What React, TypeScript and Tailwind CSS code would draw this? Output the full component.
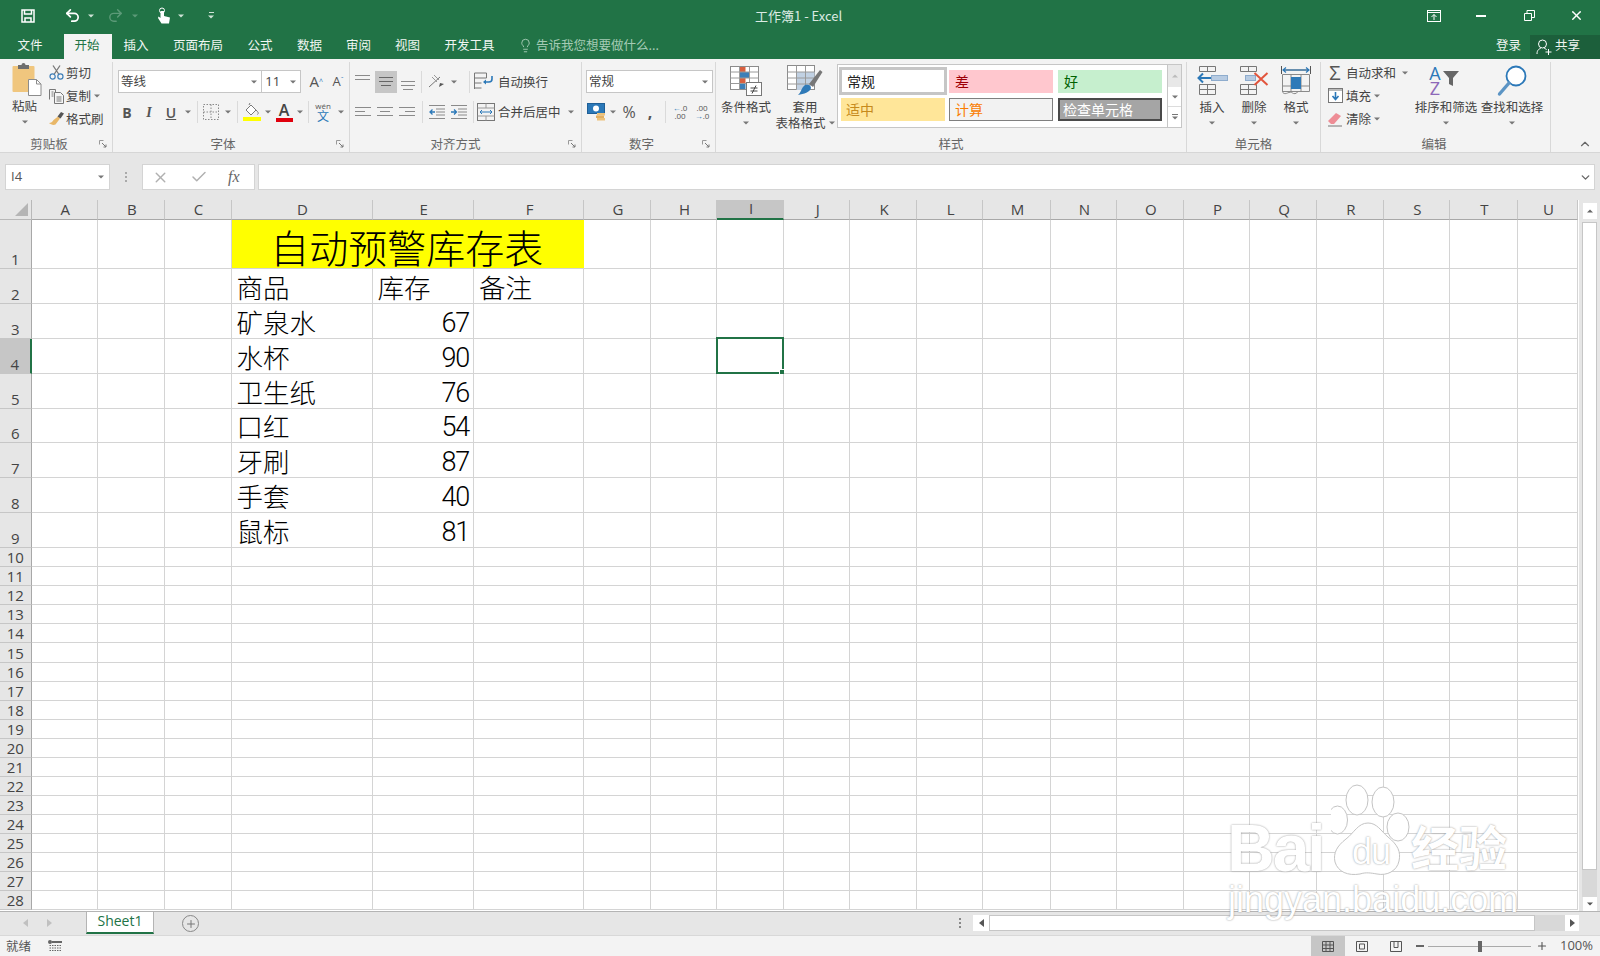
import type { ReactNode } from 'react';
import clsx from 'clsx';
import { Undo2, Redo2, X, Check, ChevronUp, ChevronDown, Plus, Lightbulb } from 'lucide-react';

const columns = ['A', 'B', 'C', 'D', 'E', 'F', 'G', 'H', 'I', 'J', 'K', 'L', 'M', 'N', 'O', 'P', 'Q', 'R', 'S', 'T', 'U'];
const stock: Record<number, [string, string, string]> = {
  2: ['商品', '库存', '备注'],
  3: ['矿泉水', '67', ''],
  4: ['水杯', '90', ''],
  5: ['卫生纸', '76', ''],
  6: ['口红', '54', ''],
  7: ['牙刷', '87', ''],
  8: ['手套', '40', ''],
  9: ['鼠标', '81', ''],
};
const rowNumbers = Array.from({ length: 28 }, (_, i) => i + 1);

function Caret({ className, color = '#777' }: { className?: string; color?: string }) {
  return (
    <svg width="6" height="4" viewBox="0 0 6 4" className={clsx('shrink-0', className)}>
      <path d="M0 0.5h6L3 3.5z" fill={color} />
    </svg>
  );
}

function Divider({ className }: { className?: string }) {
  return <div className={clsx('w-px h-[22px] bg-[#dadada] shrink-0', className)} />;
}

function Launcher() {
  return (
    <svg width="8" height="8" viewBox="0 0 8 8" className="absolute right-[5px] bottom-[4px]">
      <path d="M0.5 0.5h4M0.5 0.5v4" stroke="#999" fill="none" />
      <path d="M3 3l4 4M7 4.5V7H4.5" stroke="#777" fill="none" />
    </svg>
  );
}

function Group({ className, label, launcher, children, labelClass }: { className: string; label: string; launcher?: boolean; children: ReactNode; labelClass?: string }) {
  return (
    <section className={clsx('relative h-[90px] shrink-0 border-r border-[#d8d8d8]', className)}>
      <div className="h-[74px]">{children}</div>
      <div className={clsx('h-[16px] flex items-center justify-center text-[12.5px] leading-[16px] text-[#666]', labelClass)}>{label}</div>
      {launcher && <Launcher />}
    </section>
  );
}

function LargeButton({ className, icon, lines, caretInline }: { className?: string; icon: ReactNode; lines: string[]; caretInline?: boolean }) {
  return (
    <div className={clsx('flex flex-col items-center shrink-0', className)}>
      <div className="h-[37px] flex items-center justify-center">{icon}</div>
      {lines.map((t) => (
        <div key={t} className="h-[16px] text-[12.5px] leading-[16px] whitespace-nowrap flex items-center gap-[3px] text-[#444]">
          {t}
          {caretInline && t === lines[lines.length - 1] && <Caret />}
        </div>
      ))}
      {!caretInline && <div className="h-[16px] flex items-center"><Caret /></div>}
    </div>
  );
}

function Lines({ widths, y = [0, 4, 8], color = '#8a8a8a' }: { widths: [number, number][]; y?: number[]; color?: string }) {
  return (
    <svg width="16" height="12" viewBox="0 0 16 12">
      {widths.map(([a, b], i) => (
        <path key={i} d={`M${a} ${y[i] + 1.5}H${b}`} stroke={color} strokeWidth="1" />
      ))}
    </svg>
  );
}

function PasteIcon() {
  return (
    <svg width="32" height="34" viewBox="0 0 32 34">
      <rect x="0.5" y="4" width="22" height="26" rx="1" fill="#f0c67e" />
      <path d="M6 7V3h3.5a2 2 0 0 1 4 0H17v4z" fill="#6e6e6e" />
      <path d="M16.5 17.5h8l4.5 4.5v11.5H16.5z" fill="#fff" stroke="#8c8c8c" />
      <path d="M24.5 17.5V22H29" fill="none" stroke="#8c8c8c" />
    </svg>
  );
}

function ScissorsIcon() {
  return (
    <svg width="15" height="15" viewBox="0 0 15 15" fill="none">
      <path d="M4 0.5l6 9M11 0.5l-6 9" stroke="#777" strokeWidth="1.3" />
      <circle cx="3.6" cy="11.5" r="2.6" stroke="#3f7fb8" strokeWidth="1.2" />
      <circle cx="11.4" cy="11.5" r="2.6" stroke="#3f7fb8" strokeWidth="1.2" />
    </svg>
  );
}

function CopyIcon() {
  return (
    <svg width="15" height="16" viewBox="0 0 15 16" fill="none" stroke="#777">
      <path d="M0.5 11.5v-10h6v3" />
      <path d="M5.5 4.5h6l3 3v8h-9z" fill="#f5f5f5" />
      <path d="M7.5 9h5M7.5 11h5M7.5 13h5M2.5 4h2M2.5 6h2M2.5 8h2" />
    </svg>
  );
}

function BrushIcon() {
  return (
    <svg width="15" height="14" viewBox="0 0 15 14">
      <path d="M9 4.5l2 2-4.500 6c-2 1-5 0-6.500-1.500 2 0 3.500-1 4.500-3z" fill="#e8b768" />
      <path d="M8.500 4.500l3.500-4.500 3 1.500-3.500 5z" fill="#555" />
    </svg>
  );
}

function Fill() {
  return (
    <svg width="18" height="20" viewBox="0 0 18 20">
      <path d="M3 8l5-5 5 5-5 5z" fill="#fff" stroke="#7a7a7a" />
      <path d="M6 3l1-2M13 8c2 2 3 3 1.500 4.500" stroke="#7a7a7a" fill="none" />
      <rect x="0" y="15" width="18" height="4" fill="#ffff00" />
    </svg>
  );
}

function AlignOrient() {
  return (
    <svg width="18" height="16" viewBox="0 0 18 16" fill="none" stroke="#777">
      <path d="M1 13L12 3" />
      <path d="M4 3l5 5M6 1l5 5" stroke="#999" />
      <path d="M11 13l5-3-4-1z" fill="#555" stroke="none" />
    </svg>
  );
}

function WrapIcon() {
  return (
    <svg width="20" height="19" viewBox="0 0 20 19" fill="none">
      <path d="M0.5 1h12M0.500 6h12M0.500 11h7M0.500 16h7" stroke="#777" />
      <path d="M0.500 1v16M12.500 1v5" stroke="#777" />
      <path d="M18 4v3c0 2-1 3-3 3h-4" stroke="#2b78b8" strokeWidth="1.600" />
      <path d="M9 10l3-2.500v5z" fill="#2b78b8" />
    </svg>
  );
}

function MergeIcon() {
  return (
    <svg width="18" height="18" viewBox="0 0 18 18" fill="none">
      <rect x="0.500" y="0.500" width="17" height="17" stroke="#777" />
      <path d="M0.500 5h17M0.500 13h17M9 0.500V5M9 13v4.500" stroke="#999" />
      <path d="M3 9h12" stroke="#2b78b8" />
      <path d="M5 7L3 9l2 2M13 7l2 2-2 2" stroke="#2b78b8" />
    </svg>
  );
}

function IndentIcon({ dir }: { dir: 'in' | 'out' }) {
  return (
    <svg width="16" height="14" viewBox="0 0 16 14" fill="none">
      <path d="M0 0.500h16M7 4h9M7 7h9M7 10h9M0 13.500h16" stroke="#8a8a8a" />
      <path d={dir === 'out' ? 'M6 7H1M3.500 4.500L1 7l2.500 2.500' : 'M0 7h5M3 4.500L5.500 7 3 9.500'} stroke="#2b78b8" strokeWidth="1.300" />
    </svg>
  );
}

function MoneyIcon() {
  return (
    <svg width="20" height="18" viewBox="0 0 20 18">
      <rect x="0.500" y="0.500" width="17" height="10" fill="#2b78b8" stroke="#1f5f96" />
      <circle cx="9" cy="5.500" r="3" fill="#fff" />
      <rect x="10" y="10" width="8" height="2.500" fill="#edc27a" />
      <rect x="9" y="12.500" width="8" height="2.500" fill="#e3b062" />
      <rect x="10" y="15" width="8" height="2.500" fill="#edc27a" />
    </svg>
  );
}

function ConditionalIcon() {
  return (
    <svg width="32" height="30" viewBox="0 0 32 30" fill="none">
      <rect x="0.500" y="0.500" width="28" height="23" fill="#fff" stroke="#8c8c8c" />
      <rect x="9.500" y="1" width="6" height="5" fill="#d9603f" />
      <rect x="9.500" y="6" width="10" height="6" fill="#3c7fb8" />
      <rect x="9.500" y="12" width="6" height="5" fill="#d9603f" />
      <rect x="9.500" y="17" width="6" height="6" fill="#3c7fb8" />
      <path d="M9.500 0.500v23M19.500 0.500v23M0.500 6h28M0.500 12h28M0.500 17.500h28" stroke="#9a9a9a" />
      <rect x="16.500" y="16.500" width="15" height="13" fill="#fff" stroke="#777" />
      <path d="M20.500 22h7M20.500 25h7M26 19.500l-4 8" stroke="#444" />
    </svg>
  );
}

function TableIcon() {
  return (
    <svg width="36" height="32" viewBox="0 0 36 32" fill="none">
      <rect x="0.500" y="0.500" width="27" height="24" fill="#fff" stroke="#8c8c8c" />
      <path d="M0.500 7h27v12L17 25H9.500V7" fill="#c1d1e3" />
      <path d="M9.500 0.500v24M18.500 0.500v24M0.500 7h27M0.500 13h27M0.500 19h27" stroke="#9a9a9a" />
      <path d="M22 19L33 5l2.500 2L26 22z" fill="#777" />
      <path d="M18 20c3-1 6 0 6 3-1 4-7 6-13 7 3-2 3-7 7-10z" fill="#2f7ab8" />
    </svg>
  );
}

function InsertIcon() {
  return (
    <svg width="31" height="32" viewBox="0 0 31 32" fill="none">
      <path d="M2.500 1.500h16v5h-16zM10.500 1.500v5M2.500 19.500h16v10h-16zM2.500 24.500h16M10.500 19.500v10" stroke="#777" />
      <rect x="14.500" y="10.500" width="16" height="5" fill="#b7cbe2" stroke="#8eaccd" />
      <path d="M14 13H2M6 8.500L1.500 13 6 17.500" stroke="#2b78b8" strokeWidth="2" />
    </svg>
  );
}

function DeleteIcon() {
  return (
    <svg width="30" height="32" viewBox="0 0 30 32" fill="none">
      <path d="M1.500 1.500h16v5h-16zM9.500 1.500v5M1.500 19.500h16v10h-16zM1.500 24.500h16M9.500 19.500v10" stroke="#777" />
      <rect x="6.500" y="10.500" width="10" height="5" fill="#b7cbe2" stroke="#8eaccd" />
      <path d="M15.500 8l13 12M28.500 8l-13 12" stroke="#e2553d" strokeWidth="2" />
    </svg>
  );
}

function FormatIcon() {
  return (
    <svg width="30" height="32" viewBox="0 0 30 32" fill="none">
      <path d="M2 5h26M0.500 1v8M29.500 1v8" stroke="#555" />
      <path d="M2 5h26M5 2.500L2 5l3 2.500M25 2.500L28 5l-3 2.500" stroke="#2b78b8" strokeWidth="1.200" />
      <path d="M1.500 9.500h27v17h-27zM10 9.500v17M20 9.500v17M1.500 21h27" stroke="#8a8a8a" />
      <rect x="10" y="12" width="10" height="12" fill="#2f7ab8" />
      <path d="M1.500 26c0 3 3 3 5 2s4-1 5 0 4 1 5-1" stroke="#8a8a8a" />
    </svg>
  );
}

function SortIcon() {
  return (
    <div className="h-[34px] flex items-center mr-[4px]">
      <div className="flex flex-col items-center font-['Open_Sans'] text-[18px] leading-[15px]">
        <span className="text-[#2b78b8]">A</span>
        <span className="text-[#8d68b8]">Z</span>
      </div>
      <svg width="16" height="16" viewBox="0 0 16 16" className="ml-[2px] mb-[6px]">
        <path d="M0 1h16L10 8v8l-4-2V8z" fill="#666" />
      </svg>
    </div>
  );
}

function SearchIcon() {
  return (
    <svg width="30" height="32" viewBox="0 0 30 32" fill="none">
      <circle cx="19" cy="11" r="9.500" stroke="#2b78b8" strokeWidth="1.800" fill="#fff" />
      <path d="M12 18L2.500 29" stroke="#5b94c4" strokeWidth="3.400" strokeLinecap="round" />
    </svg>
  );
}

function SmallRow({ icon, label, caret, className, labelClass = 'ml-[2px]' }: { icon: ReactNode; label: string; caret?: boolean; className?: string; labelClass?: string }) {
  return (
    <div className={clsx('flex items-center h-[23px]', className)}>
      <div className="w-[16px] flex justify-center">{icon}</div>
      <span className={clsx('text-[12.5px] leading-[16px] text-[#444] whitespace-nowrap', labelClass)}>{label}</span>
      {caret && <Caret className="ml-[3px]" />}
    </div>
  );
}

function Ribbon() {
  return (
    <div className="h-[94px] bg-[#f3f3f3] border-b border-[#d6d6d6] flex items-start pt-[3px] shrink-0">
      <Group className="w-[113px]" label="剪贴板" launcher labelClass="pr-[14px]">
        <div className="flex">
          <div className="w-[48px] pl-[12px] flex flex-col items-start">
            <PasteIcon />
            <div className="text-[12.5px] leading-[16px] text-[#444] mt-[2px]">粘贴</div>
            <Caret className="ml-[10px] mt-[6px]" />
          </div>
          <div className="flex flex-col pt-0">
            <SmallRow icon={<ScissorsIcon />} label="剪切" className="mt-[-1px]" />
            <SmallRow icon={<CopyIcon />} label="复制" caret />
            <SmallRow icon={<BrushIcon />} label="格式刷" />
          </div>
        </div>
      </Group>

      <Group className="w-[237px]" label="字体" launcher labelClass="pr-[16px]">
        <div className="pt-[8px] pl-[5px] flex flex-col gap-[8px]">
          <div className="flex items-center h-[23px]">
            <div className="w-[145px] h-[23px] bg-white border border-[#c6c6c6] flex items-center pl-[2px] text-[12.5px] text-[#444]">
              <span>等线</span>
              <Caret className="ml-auto mr-[4px]" />
            </div>
            <div className="w-[39px] h-[23px] bg-white border border-l-0 border-[#c6c6c6] flex items-center pl-[3px] text-[13px] text-[#444] font-['Open_Sans']">
              <span>11</span>
              <Caret className="ml-auto mr-[4px]" />
            </div>
            <span className="ml-[4px] w-[22px] text-center text-[15px] text-[#555] font-['Open_Sans']">A<sup className="text-[#2b78b8] text-[7px]">^</sup></span>
            <span className="w-[22px] text-center text-[13px] text-[#555] font-['Open_Sans']">A<sup className="text-[#2b78b8] text-[7px]">ˇ</sup></span>
          </div>
          <div className="flex items-center h-[22px] ml-[-2px] text-[#555]">
            <span className="w-[22px] text-center font-bold text-[14px] font-['Open_Sans']">B</span>
            <span className="w-[22px] text-center italic font-bold text-[14px] font-['Liberation_Serif']">I</span>
            <span className="w-[22px] text-center underline font-['Open_Sans'] font-semibold text-[14px]">U</span>
            <div className="w-[11px] flex justify-center"><Caret /></div>
            <Divider className="ml-[4px]" />
            <div className="w-[26px] flex justify-center">
              <svg width="16" height="16" viewBox="0 0 16 16" fill="none" stroke="#8a8a8a" strokeDasharray="1.500 1.500">
                <rect x="0.500" y="0.500" width="15" height="15" />
                <path d="M8 0.500v15M0.500 8h15" />
              </svg>
            </div>
            <div className="w-[8px] flex justify-center"><Caret /></div>
            <Divider className="ml-[5px]" />
            <div className="w-[24px] ml-[2px] flex justify-center"><Fill /></div>
            <div className="w-[8px] flex justify-center"><Caret /></div>
            <div className="w-[24px] flex flex-col items-center">
              <span className="text-[16px] leading-[15px] font-semibold font-['Open_Sans'] text-[#444]">A</span>
              <div className="w-[17px] h-[4px] bg-[#e0000d]" />
            </div>
            <div className="w-[8px] flex justify-center"><Caret /></div>
            <Divider className="ml-[4px]" />
            <div className="w-[28px] flex flex-col items-center leading-none">
              <span className="text-[8px] h-[8px] leading-[8px] font-['Open_Sans'] text-[#555]">wén</span>
              <span className="text-[12px] h-[12px] leading-[12px] text-[#2b78b8]">文</span>
            </div>
            <div className="w-[8px] flex justify-center"><Caret /></div>
          </div>
        </div>
      </Group>

      <Group className="w-[232px]" label="对齐方式" launcher labelClass="pr-[20px]">
        <div className="pt-[8px] flex flex-col gap-[8px]">
          <div className="flex items-center h-[23px] pl-[2px]">
            <div className="w-[22px] h-[22px] flex justify-center items-start pt-[3px]"><Lines widths={[[0, 15], [0, 15]]} /></div>
            <div className="ml-[1px] w-[22px] h-[22px] bg-[#c6c6c6] flex justify-center items-center"><Lines widths={[[1, 15], [1, 15], [3, 13]]} color="#666" /></div>
            <div className="w-[22px] h-[22px] flex justify-center items-end pb-[1px]"><Lines widths={[[1, 15], [1, 15], [3, 13]]} /></div>
            <Divider className="ml-[2px]" />
            <div className="w-[29px] flex justify-center"><AlignOrient /></div>
            <Caret />
            <Divider className="ml-[12px]" />
            <div className="w-[28px] flex justify-center"><WrapIcon /></div>
            <span className="text-[12.5px] text-[#444] leading-[16px]">自动换行</span>
          </div>
          <div className="flex items-center h-[22px] pl-[2px]">
            <div className="w-[22px] flex justify-center"><Lines widths={[[0, 16], [0, 10], [0, 16]]} /></div>
            <div className="w-[22px] flex justify-center"><Lines widths={[[0, 16], [3, 13], [0, 16]]} /></div>
            <div className="w-[22px] flex justify-center"><Lines widths={[[0, 16], [6, 16], [0, 16]]} /></div>
            <Divider className="ml-[4px]" />
            <div className="w-[28px] flex justify-center"><IndentIcon dir="out" /></div>
            <div className="w-[16px] flex justify-center"><IndentIcon dir="in" /></div>
            <Divider className="ml-[6px]" />
            <div className="w-[24px] flex justify-center"><MergeIcon /></div>
            <span className="text-[12.5px] text-[#444] leading-[16px]">合并后居中</span>
            <Caret className="ml-[7px]" />
          </div>
        </div>
      </Group>

      <Group className="w-[134px]" label="数字" launcher labelClass="pr-[14px]">
        <div className="pt-[8px] pl-[4px] flex flex-col gap-[8px]">
          <div className="w-[127px] h-[23px] bg-white border border-[#c6c6c6] flex items-center pl-[2px] text-[12.5px] text-[#444]">
            <span>常规</span>
            <Caret className="ml-auto mr-[4px]" />
          </div>
          <div className="flex items-center h-[22px] text-[#555]">
            <div className="w-[20px] ml-[1px]"><MoneyIcon /></div>
            <Caret className="ml-[3px]" />
            <span className="w-[24px] ml-[1px] text-center text-[16px] font-['Open_Sans']">%</span>
            <span className="w-[18px] text-center text-[16px] font-bold font-['Open_Sans']">,</span>
            <Divider className="ml-[6px]" />
            <span className="w-[26px] ml-[1px] text-[8px] leading-[8px] text-center font-['Open_Sans']"><span className="text-[#2b78b8]">←</span>.0<br />.00</span>
            <span className="w-[18px] text-[8px] leading-[8px] text-center font-['Open_Sans']">.00<br /><span className="text-[#2b78b8]">→</span>.0</span>
          </div>
        </div>
      </Group>

      <Group className="w-[471px]" label="样式">
        <div className="flex">
          <LargeButton className="w-[62px] ml-[-1px]" icon={<ConditionalIcon />} lines={['条件格式']} />
          <LargeButton className="w-[54px] ml-[1px]" icon={<TableIcon />} lines={['套用', '表格格式']} caretInline />
          <div className="ml-[5px] mt-[2px] w-[345px] h-[64px] bg-white border border-[#c6c6c6] flex shrink-0 text-[14px]">
            <div className="flex-1 grid grid-cols-[110px_109px_109px] grid-rows-[28px_28px] pl-[1px] pt-[2px] items-center">
              <div className="h-[28px] w-[108px] border-[3px] border-[#c6c6c6] flex items-center pl-[5px] text-[#222]">常规</div>
              <div className="h-[23px] w-[104px] bg-[#ffc7ce] flex items-center pl-[6px] text-[#9c0006]">差</div>
              <div className="h-[23px] w-[104px] bg-[#c6efce] flex items-center pl-[6px] text-[#006100]">好</div>
              <div className="h-[23px] w-[104px] ml-[2px] bg-[#ffe699] flex items-center pl-[5px] text-[#c68a1c]">适中</div>
              <div className="h-[23px] w-[104px] bg-[#f2f2f2] border border-[#7f7f7f] flex items-center pl-[5px] text-[#fa7d00]">计算</div>
              <div className="h-[23px] w-[104px] bg-[#a5a5a5] border-[2px] border-[#4a4a4a] flex items-center pl-[3px] text-white">检查单元格</div>
            </div>
            <div className="w-[14px] flex flex-col border-l border-[#c6c6c6]">
              <div className="h-[22px] bg-[#e8e8e8] flex items-center justify-center"><Caret className="rotate-180" color="#bbb" /></div>
              <div className="h-[20px] border-b border-[#dcdcdc] flex items-center justify-center"><Caret /></div>
              <div className="flex-1 flex flex-col items-center justify-center gap-[1px]">
                <div className="w-[6px] h-px bg-[#777]" />
                <Caret />
              </div>
            </div>
          </div>
        </div>
      </Group>

      <Group className="w-[134px]" label="单元格">
        <div className="flex pl-[4px]">
          <LargeButton className="w-[42px]" icon={<InsertIcon />} lines={['插入']} />
          <LargeButton className="w-[42px]" icon={<DeleteIcon />} lines={['删除']} />
          <LargeButton className="w-[42px]" icon={<FormatIcon />} lines={['格式']} />
        </div>
      </Group>

      <Group className="w-[230px]" label="编辑" labelClass="pr-[3px]">
        <div className="flex">
          <div className="w-[94px] pl-[6px] flex flex-col">
            <div className="flex items-center mt-[-1px]">
              <SmallRow icon={<span className="text-[20px] leading-[20px] text-[#555] font-['Open_Sans']">Σ</span>} label="自动求和" labelClass="ml-[3px]" />
              <Caret className="ml-[6px]" />
            </div>
            <SmallRow
              labelClass="ml-[3px]"
              icon={
                <svg width="15" height="15" viewBox="0 0 15 15" fill="none">
                  <rect x="0.500" y="0.500" width="14" height="14" fill="#fff" stroke="#777" />
                  <path d="M0.500 2h14" stroke="#777" />
                  <path d="M7.500 4v7M4.500 8l3 3.500 3-3.500" stroke="#2b78b8" strokeWidth="1.600" />
                </svg>
              }
              label="填充"
              caret
            />
            <SmallRow
              labelClass="ml-[3px]"
              icon={
                <svg width="16" height="16" viewBox="0 0 16 16" fill="none">
                  <path d="M1 10l8-8 5 3-7 8H4z" fill="#ee8d96" />
                  <path d="M1 15h14" stroke="#777" />
                </svg>
              }
              label="清除"
              caret
            />
          </div>
          <LargeButton className="w-[62px]" icon={<SortIcon />} lines={['排序和筛选']} />
          <LargeButton className="w-[62px] ml-[4px]" icon={<SearchIcon />} lines={['查找和选择']} />
        </div>
      </Group>

      <div className="flex-1 h-[90px] flex items-end justify-end pr-[8px] pb-[1px]">
        <ChevronUp size={14} className="text-[#666]" />
      </div>
    </div>
  );
}

function Sheet() {
  return (
    <div className="relative w-[1579px] h-[711px] grid grid-cols-[31.5px_66.5px_66.5px_67px_141px_101.5px_110px_66.7px_66.5px_67px_66px_67px_66px_67.5px_66.5px_66.5px_66.5px_67px_66.5px_66.5px_67.5px_60.8px] grid-rows-[19.5px_49.5px_repeat(8,34.9px)_repeat(19,19.07px)] bg-white font-['Open_Sans','Noto_Sans_CJK_SC',sans-serif]">
      <div className="bg-[#e6e6e6] border-r border-b border-[#b8b8b8] flex items-end justify-end pr-[3px] pb-[3px]">
        <svg width="13" height="13" viewBox="0 0 13 13"><path d="M13 0v13H0z" fill="#b5b5b5" /></svg>
      </div>
      {columns.map((c) => (
        <div
          key={c}
          className={clsx(
            'flex items-center justify-center pl-[2px] text-[15px] leading-none text-[#444] border-r border-b border-r-[#c6c6c6]',
            c === 'I' ? 'bg-[#c6c6c6] border-b-2 border-b-[#217346]' : 'bg-[#e6e6e6] border-b-[#a8a8a8]',
          )}
        >
          {c}
        </div>
      ))}
      {rowNumbers.map((n) => (
        <Row key={n} n={n} />
      ))}
    </div>
  );
}

function Row({ n }: { n: number }) {
  const data = stock[n];
  return (
    <>
      <div
        className={clsx(
          'flex items-end justify-center text-[15px] leading-[18px] text-[#444] border-b border-b-[#c6c6c6] border-r',
          n === 4 ? 'bg-[#c6c6c6] border-r-2 border-r-[#217346]' : 'bg-[#e6e6e6] border-r-[#a8a8a8]',
        )}
      >
        {n}
      </div>
      {columns.map((c) => {
        if (n === 1 && (c === 'E' || c === 'F')) return null;
        if (n === 1 && c === 'D') {
          return (
            <div key={c} className="col-span-3 bg-[#ffff00] border-b border-[#d4d4d4] flex items-end justify-center pr-[2px] text-[39px] leading-[43px] font-light text-black font-['Noto_Sans_CJK_SC',sans-serif]">
              自动预警库存表
            </div>
          );
        }
        let text = '';
        if (data && c === 'D') text = data[0];
        if (data && c === 'E') text = data[1];
        if (data && c === 'F') text = data[2];
        const numeric = /^\d+$/.test(text);
        return (
          <div
            key={c}
            className={clsx(
              'relative flex items-end border-r border-b border-[#d4d4d4] text-black whitespace-nowrap',
              numeric
                ? "justify-end pr-[4px] text-[27px] leading-[29px] font-['Roboto'] font-light tracking-[-1.2px]"
                : "pl-[5px] text-[26.5px] leading-[32px] font-light font-['Noto_Sans_CJK_SC',sans-serif]",
            )}
          >
            {text}
            {n === 4 && c === 'I' && (
              <div className="absolute -left-[1px] -top-[2px] -right-[1px] -bottom-[1px] border-2 border-[#217346]">
                <div className="absolute -right-[3px] -bottom-[3px] w-[6px] h-[6px] bg-[#217346] border border-white" />
              </div>
            )}
          </div>
        );
      })}
    </>
  );
}

function Watermark() {
  return (
    <div className="absolute left-[1225px] top-[782px] w-[295px] h-[140px] pointer-events-none text-white [text-shadow:0_0_2px_#8f8f8f] font-['Liberation_Sans','Noto_Sans_CJK_SC',sans-serif]">
      <span className="absolute left-[2px] top-[28px] text-[66px] leading-[76px] font-bold tracking-[-2px]">Bai</span>
      <svg width="80" height="96" viewBox="0 0 80 96" className="absolute left-[106px] top-[2px]" fill="#fff" stroke="#c4c4c4" strokeWidth="1">
        <ellipse cx="26" cy="16" rx="11" ry="15" />
        <ellipse cx="52" cy="18" rx="11" ry="15" />
        <ellipse cx="6.500" cy="36" rx="10" ry="14" />
        <ellipse cx="67" cy="43" rx="11" ry="14" />
        <path d="M37 39c9 0 13 8 20 14 10 8 13 15 11 24-2 10-12 15-22 13-6-1-11-2-17 0-12 2-22-2-25-12-2-9 2-16 11-23 8-6 12-16 22-16z" />
      </svg>
      <span className="absolute left-[127px] top-[50px] text-[36px] leading-[40px] tracking-[-1px] text-white">du</span>
      <span className="absolute left-[186px] top-[40px] text-[48px] leading-[56px] font-bold">经验</span>
      <span className="absolute left-[3px] top-[98px] text-[36px] leading-[40px] whitespace-nowrap">jingyan.baidu.com</span>
    </div>
  );
}

export default function App() {
  return (
    <div className="relative w-[1600px] h-[956px] overflow-hidden flex flex-col bg-[#e6e6e6] font-['Noto_Sans_CJK_SC','Liberation_Sans',sans-serif] text-[#444]">
      {/* title bar */}
      <div className="h-[34px] bg-[#217346] flex items-center relative shrink-0 text-white pb-[3px]">
        <div className="flex items-center">
          <svg width="14" height="14" viewBox="0 0 14 14" className="ml-[21px]" fill="none" stroke="#fff" strokeWidth="1.500">
            <path d="M1 1h12v12H1z" />
            <path d="M3.500 1v4h7V1M4 13V9h6v4" />
          </svg>
          <Undo2 size={17} strokeWidth={2.4} className="ml-[29px] text-white" />
          <Caret className="ml-[7px]" color="#cfe3d7" />
          <Redo2 size={17} strokeWidth={2} className="ml-[13px] text-[#5c9a78]" />
          <Caret className="ml-[8px]" color="#5c9a78" />
          <svg width="14" height="17" viewBox="0 0 14 17" className="ml-[19px]" fill="#fff">
            <circle cx="5" cy="3.500" r="2.500" fill="none" stroke="#fff" />
            <path d="M3.500 4v7L1.500 9.500 1 11l3.500 5.500H12l1-6-6-1.500V4z" />
          </svg>
          <Caret className="ml-[7px]" color="#cfe3d7" />
          <div className="ml-[24px] flex flex-col items-center gap-[2px]">
            <div className="w-[5px] h-px bg-[#cfe3d7]" />
            <Caret color="#cfe3d7" />
          </div>
        </div>
        <div className="absolute left-[755px] w-[87px] text-center text-[13px] whitespace-nowrap text-[#dcebe3] font-['Noto_Sans_CJK_SC','Open_Sans',sans-serif]">工作簿1 - Excel</div>
        <div className="ml-auto flex items-center h-full">
          <div className="w-[47px] flex justify-center pr-[4px]">
            <svg width="14" height="12" viewBox="0 0 14 12" fill="none" stroke="#fff">
              <rect x="0.500" y="0.500" width="13" height="11" />
              <path d="M0.500 2.500h13M7 10V4.500M4.500 7L7 4.500 9.500 7" />
            </svg>
          </div>
          <div className="w-[47px] flex justify-center pr-[4px]"><div className="w-[10px] h-[2px] bg-white" /></div>
          <div className="w-[47px] flex justify-center">
            <svg width="11" height="11" viewBox="0 0 11 11" fill="none" stroke="#fff">
              <path d="M0.500 3.500h7v7h-7zM3 3.500v-3h7.500v7H7.500" />
            </svg>
          </div>
          <div className="w-[47px] flex justify-center"><X size={15} strokeWidth={2.2} /></div>
        </div>
      </div>

      {/* tabs */}
      <div className="h-[25px] bg-[#217346] flex items-stretch shrink-0 text-[12.5px] text-[#f0f6f2]">
        {[
          ['文件', 'w-[64px] pr-[4px]'],
          ['开始', 'w-[48px] bg-[#f3f3f3] text-[#217346] pr-[2px]'],
          ['插入', 'w-[50px] pr-[2px]'],
          ['页面布局', 'w-[72px]'],
          ['公式', 'w-[52px]'],
          ['数据', 'w-[47px]'],
          ['审阅', 'w-[51px]'],
          ['视图', 'w-[47px]'],
          ['开发工具', 'w-[77px]'],
        ].map(([t, cls]) => (
          <div key={t} className={clsx('flex items-center justify-center pb-[2px]', cls)}>{t}</div>
        ))}
        <div className="ml-[10px] flex items-center pb-[2px] text-[#a5cbb5]">
          <Lightbulb size={15} strokeWidth={1.5} />
          <span className="ml-[3px]">告诉我您想要做什么...</span>
        </div>
        <div className="ml-auto flex items-center">
          <span className="pb-[2px]">登录</span>
          <div className="ml-[9px] w-[70px] h-[24px] bg-[#1c5f3b] flex items-center pl-[6px]">
            <svg width="16" height="16" viewBox="0 0 16 16" fill="none" stroke="#fff">
              <circle cx="6.500" cy="5" r="4" />
              <path d="M1 15c0-4 2-5 4-6M8 9c1.500.500 2 1 2.500 2M9.500 13h6M12.500 10v6" />
            </svg>
            <span className="ml-[3px] pb-[2px]">共享</span>
          </div>
        </div>
      </div>

      <Ribbon />

      {/* formula bar */}
      <div className="h-[47px] shrink-0 bg-[#e6e6e6] pt-[11px]">
        <div className="flex items-stretch h-[26px]">
          <div className="ml-[5px] w-[105px] bg-white border border-[#d4d4d4] flex items-center pl-[5px] text-[13px] font-['Open_Sans'] text-[#555]">
            I4
            <Caret className="ml-auto mr-[5px]" />
          </div>
          <div className="w-[32px] flex flex-col items-center justify-center gap-[2px]">
            <div className="w-[2px] h-[2px] bg-[#aaa]" />
            <div className="w-[2px] h-[2px] bg-[#aaa]" />
            <div className="w-[2px] h-[2px] bg-[#aaa]" />
          </div>
          <div className="w-[113px] bg-white border border-[#d4d4d4] flex items-center">
            <X size={17} className="ml-[9px] text-[#b0b0b0]" />
            <Check size={18} className="ml-[21px] text-[#b0b0b0]" />
            <span className="ml-[20px] italic text-[16px] text-[#666] font-['Liberation_Serif']">fx</span>
          </div>
          <div className="ml-[3px] flex-1 mr-[5px] bg-white border border-[#d4d4d4] flex items-center justify-end pr-[2px]">
            <ChevronDown size={13} strokeWidth={2.5} className="text-[#666]" />
          </div>
        </div>
      </div>

      {/* sheet */}
      <div className="flex h-[711px] shrink-0">
        <Sheet />
        <div className="w-[21px] flex flex-col items-center bg-[#e6e6e6] pt-[3px]">
          <div className="w-[14px] h-[16px] bg-white flex items-center justify-center"><Caret className="rotate-180" color="#666" /></div>
          <div className="w-[15px] h-[648px] mt-[3px] bg-white border border-[#c6c6c6]" />
          <div className="w-[15px] flex-1 bg-[#d8d8d8]" />
          <div className="w-[14px] h-[14px] bg-white flex items-center justify-center"><Caret color="#555" /></div>
        </div>
      </div>

      {/* sheet tabs */}
      <div className="h-[24px] shrink-0 bg-[#e6e6e6] border-t border-[#b4b4b4] flex items-start">
        <div className="w-[86px] h-[22px] flex items-center pl-[23px] gap-[19px]">
          <svg width="5" height="8" viewBox="0 0 5 8"><path d="M5 0v8L0 4z" fill="#c0c0c0" /></svg>
          <svg width="5" height="8" viewBox="0 0 5 8"><path d="M0 0v8l5-4z" fill="#c0c0c0" /></svg>
        </div>
        <div className="w-[68px] h-[22px] bg-white border-x border-[#b4b4b4] border-b-2 border-b-[#217346] flex items-center justify-center pb-[3px] text-[14px] text-[#217346] font-['Open_Sans']">Sheet1</div>
        <div className="ml-[28px] mt-[3px] w-[17px] h-[17px] rounded-full border border-[#888] flex items-center justify-center">
          <Plus size={12} strokeWidth={2} className="text-[#777]" />
        </div>
        <div className="ml-[760px] mt-[6px] flex flex-col gap-[2px]">
          <div className="w-[2px] h-[2px] bg-[#888]" />
          <div className="w-[2px] h-[2px] bg-[#888]" />
          <div className="w-[2px] h-[2px] bg-[#888]" />
        </div>
        <div className="ml-[12px] mt-[3px] h-[16px] w-[606px] flex">
          <div className="w-[16px] h-full bg-white flex items-center justify-center">
            <svg width="5" height="8" viewBox="0 0 5 8"><path d="M5 0v8L0 4z" fill="#555" /></svg>
          </div>
          <div className="w-[546px] h-full bg-white border border-[#c6c6c6]" />
          <div className="w-[30px] h-full bg-[#d8d8d8]" />
          <div className="w-[14px] h-full bg-white flex items-center justify-center">
            <svg width="5" height="8" viewBox="0 0 5 8"><path d="M0 0v8l5-4z" fill="#555" /></svg>
          </div>
        </div>
      </div>

      {/* status bar */}
      <div className="flex-1 bg-[#f3f3f3] flex items-center border-t border-[#d8d8d8] text-[12.5px] text-[#555]">
        <span className="ml-[6px]">就绪</span>
        <svg width="14" height="13" viewBox="0 0 14 13" className="ml-[17px]" fill="none" stroke="#666">
          <path d="M4 2h10" strokeWidth="2" />
          <path d="M1.500 5.500h12M1.500 8h12M1.500 10.500h12" strokeDasharray="1.500 1" />
          <circle cx="2" cy="2" r="2" fill="#666" stroke="none" />
        </svg>
        <div className="ml-auto flex items-center h-full">
          <div className="w-[34px] h-full bg-[#c6c6c6] flex items-center justify-center">
            <svg width="12" height="11" viewBox="0 0 12 11" fill="none" stroke="#555"><path d="M0.500 0.500h11v10H0.500zM4 0.500v10M8 0.500v10M0.500 4h11M0.500 7.500h11" /></svg>
          </div>
          <div className="w-[34px] flex justify-center">
            <svg width="12" height="11" viewBox="0 0 12 11" fill="none" stroke="#555"><path d="M0.500 0.500h11v10H0.500zM3.500 3h5v5h-5z" /></svg>
          </div>
          <div className="w-[34px] flex justify-center">
            <svg width="12" height="11" viewBox="0 0 12 11" fill="none" stroke="#555"><path d="M0.500 0.500h11v10H0.500zM4 0.500v6h4v-6" /></svg>
          </div>
          <div className="ml-[3px] w-[8px] h-[2px] bg-[#666]" />
          <div className="ml-[4px] w-[103px] h-px bg-[#aaa] flex items-center justify-center">
            <div className="w-[4px] h-[11px] bg-[#666] shrink-0" />
          </div>
          <Plus size={12} strokeWidth={2.2} className="ml-[5px] text-[#555]" />
          <span className="ml-[12px] mr-[7px] w-[33px] text-[13px] font-['Open_Sans'] whitespace-nowrap">100%</span>
        </div>
      </div>

      <Watermark />
    </div>
  );
}
